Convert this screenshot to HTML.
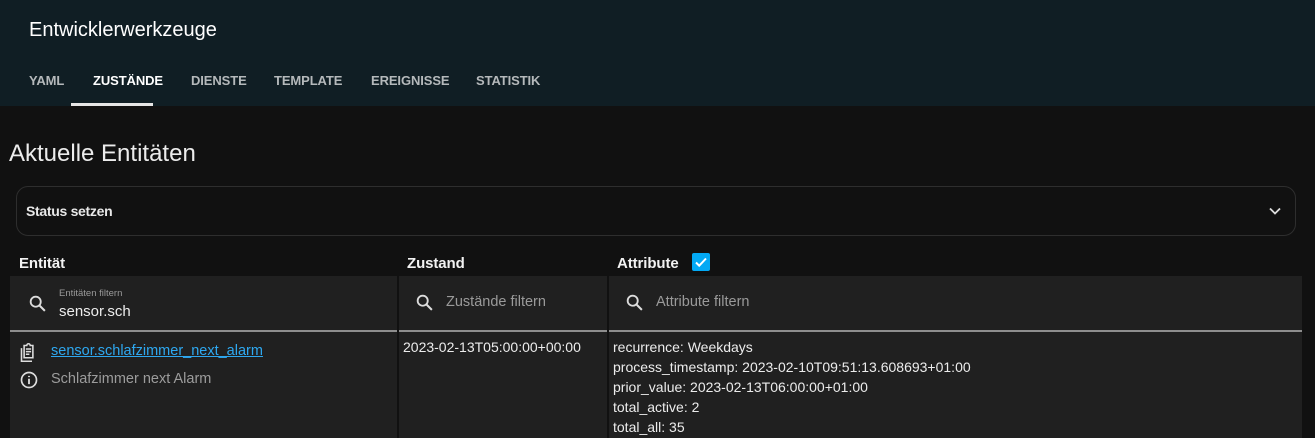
<!DOCTYPE html>
<html><head><meta charset="utf-8"><style>
*{margin:0;padding:0;box-sizing:border-box}
body{width:1315px;height:438px;overflow:hidden;background:#111111;font-family:"Liberation Sans",sans-serif;color:#e1e1e1;position:relative}
.hdr{position:absolute;left:0;top:0;width:1315px;height:106px;background:#101e24}
.title{position:absolute;left:29px;top:19px;font-size:20px;color:#fff}
.tab{position:absolute;top:73px;font-size:13px;font-weight:bold;color:#b5b9bb;letter-spacing:-0.1px}
.ul{position:absolute;left:71px;top:103px;width:82px;height:3px;background:#e6e6e6}
.h1{position:absolute;left:9px;top:140px;font-size:24px;color:#ececec}
.card{position:absolute;left:16px;top:186px;width:1280px;height:50px;border:1px solid #2e2e2e;border-radius:12px}
.card span{position:absolute;left:9px;top:16px;font-size:14px;font-weight:bold;color:#e8e8e8;letter-spacing:-0.3px}
.th{position:absolute;top:255px;font-size:15px;font-weight:bold;color:#f2f2f2;letter-spacing:-0.1px}
.col{position:absolute;top:276px;height:162px;background:#202020}
.line{position:absolute;top:330px;height:2px;background:#8e8e8e}
.ph{position:absolute;font-size:14.5px;color:#9a9a9a}
.t{position:absolute;font-size:14px;color:#ececec}
svg{position:absolute}
</style></head><body>
<div class="hdr">
<div class="title">Entwicklerwerkzeuge</div>
<div class="tab" style="left:29px">YAML</div>
<div class="tab" style="left:93px;color:#fff">ZUSTÄNDE</div>
<div class="tab" style="left:191px">DIENSTE</div>
<div class="tab" style="left:274px">TEMPLATE</div>
<div class="tab" style="left:371px">EREIGNISSE</div>
<div class="tab" style="left:476px">STATISTIK</div>
<div class="ul"></div>
</div>
<div class="h1">Aktuelle Entitäten</div>
<div class="card"><span>Status setzen</span>
<svg style="left:1248px;top:14px" width="20" height="20" viewBox="0 0 24 24"><path d="M6 9l6 6 6-6" stroke="#ddd" stroke-width="2.2" fill="none"/></svg></div>
<div class="th" style="left:19px">Entität</div>
<div class="th" style="left:407px">Zustand</div>
<div class="th" style="left:617px">Attribute</div>
<svg style="left:692px;top:253px" width="18" height="18" viewBox="0 0 18 18"><rect width="18" height="18" rx="2" fill="#03a9f4"/><path d="M4 9.5l3.2 3.2L14 5.5" stroke="#fff" stroke-width="2" fill="none"/></svg>
<div class="col" style="left:10px;width:387px"></div>
<div class="col" style="left:399px;width:208px"></div>
<div class="col" style="left:609px;width:693px"></div>
<div class="line" style="left:10px;width:387px"></div>
<div class="line" style="left:399px;width:208px"></div>
<div class="line" style="left:609px;width:693px"></div>
<svg style="left:27px;top:293px" width="22" height="22" viewBox="0 0 24 24"><circle cx="9.5" cy="9.5" r="5.5" stroke="#ddd" stroke-width="2" fill="none"/><path d="M13.5 13.5l6 6" stroke="#ddd" stroke-width="2.2"/></svg>
<div class="ph" style="left:59px;top:288px;font-size:9.5px">Entitäten filtern</div>
<div class="t" style="left:59px;top:303px;font-size:15px">sensor.sch</div>
<svg style="left:414px;top:292px" width="22" height="22" viewBox="0 0 24 24"><circle cx="9.5" cy="9.5" r="5.5" stroke="#ddd" stroke-width="2" fill="none"/><path d="M13.5 13.5l6 6" stroke="#ddd" stroke-width="2.2"/></svg>
<div class="ph" style="left:446px;top:294px">Zustände filtern</div>
<svg style="left:624px;top:292px" width="22" height="22" viewBox="0 0 24 24"><circle cx="9.5" cy="9.5" r="5.5" stroke="#ddd" stroke-width="2" fill="none"/><path d="M13.5 13.5l6 6" stroke="#ddd" stroke-width="2.2"/></svg>
<div class="ph" style="left:656px;top:294px">Attribute filtern</div>
<svg style="left:18px;top:342px" width="21" height="21" viewBox="0 0 24 24"><path d="M7 4h3a2 2 0 0 1 4 0h3v14H7z M9 8h6 M9 11h6 M9 14h4 M4 7v15h12" stroke="#ddd" stroke-width="1.8" fill="none"/></svg>
<div class="t" style="left:51px;top:343px;color:#2ea8f0;text-decoration:underline;font-size:14.5px">sensor.schlafzimmer_next_alarm</div>
<svg style="left:19px;top:370px" width="20" height="20" viewBox="0 0 24 24"><circle cx="12" cy="12" r="9" stroke="#ddd" stroke-width="2" fill="none"/><path d="M12 10.5v6.5M12 7v1.5" stroke="#ddd" stroke-width="2.2"/></svg>
<div class="t" style="left:51px;top:371px;color:#9c9c9c;font-size:14.5px">Schlafzimmer next Alarm</div>
<div class="t" style="left:403px;top:339px">2023-02-13T05:00:00+00:00</div>
<div class="t" style="left:613px;top:339px">recurrence: Weekdays</div>
<div class="t" style="left:613px;top:359px">process_timestamp: 2023-02-10T09:51:13.608693+01:00</div>
<div class="t" style="left:613px;top:379px">prior_value: 2023-02-13T06:00:00+01:00</div>
<div class="t" style="left:613px;top:399px">total_active: 2</div>
<div class="t" style="left:613px;top:419px">total_all: 35</div>
</body></html>
